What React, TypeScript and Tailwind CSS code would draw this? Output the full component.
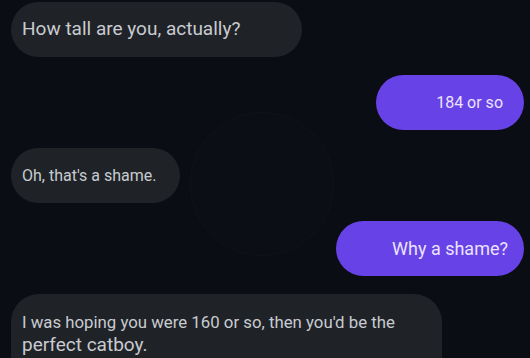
import React from 'react';

type Msg = { side: 'left' | 'right'; box: string; text: string; size: string };

const messages: Msg[] = [
  { side: 'left', box: 'w-[291px] h-[55px] pl-[11px]', text: 'How tall are you, actually?', size: 'text-[19px]' },
  { side: 'right', box: 'w-[148px] h-[55px] pr-[21px]', text: '184 or so', size: 'text-[16px]' },
  { side: 'left', box: 'w-[169px] h-[55px] pl-[11px]', text: "Oh, that's a shame.", size: 'text-[16px]' },
  { side: 'right', box: 'w-[188px] h-[55px] pr-[16px]', text: 'Why a shame?', size: 'text-[18px]' },
];

const App: React.FC = () => {
  return (
    <div className="relative w-[530px] h-[358px] overflow-hidden bg-[#0a0d13] font-['Roboto','Liberation_Sans',sans-serif]">
      {/* faint background ring */}
      <div className="absolute left-[190px] top-[112px] w-[144px] h-[144px] rounded-full bg-[#0b0f15] border border-[#0f131a]"></div>

      <div className="relative flex flex-col gap-[18px] pt-[2px] pl-[11px] pr-[6px]">
        {messages.map((m, i) => (
          <div key={i} className={`flex ${m.side === 'right' ? 'justify-end' : 'justify-start'}`}>
            <div
              className={`${m.box} rounded-full flex items-center ${
                m.side === 'right'
                  ? 'justify-end bg-[#6742e6] text-[#ebe3ff]'
                  : 'justify-start bg-[#1f2328] text-[#c9cbd0]'
              }`}
            >
              <span className={m.size}>{m.text}</span>
            </div>
          </div>
        ))}

        {/* long reply, cut by the bottom edge */}
        <div className="flex justify-start">
          <div className="w-[431px] h-[90px] rounded-[28px] bg-[#1f2328] text-[#c9cbd0] pl-[11px] pt-[17px]">
            <div className="text-[16.8px] leading-[22px]">I was hoping you were 160 or so, then you'd be the</div>
            <div className="text-[19px] leading-[24px]">perfect catboy.</div>
          </div>
        </div>
      </div>
    </div>
  );
};

export default App;
